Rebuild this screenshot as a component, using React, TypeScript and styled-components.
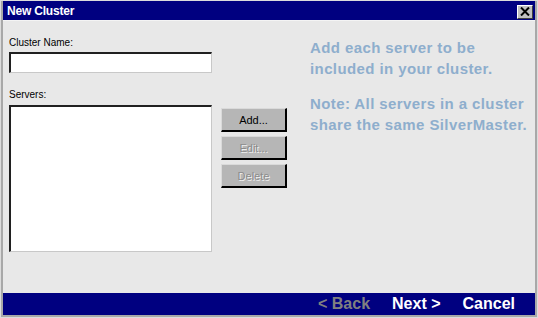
import React from "react";
import styled, { createGlobalStyle } from "styled-components";

const GlobalStyle = createGlobalStyle`
  html, body {
    margin: 0;
    padding: 0;
    background: #c0c0c0;
  }
  body {
    font-family: "Liberation Sans", Arial, sans-serif;
  }
`;

const Window = styled.div`
  width: 538px;
  height: 318px;
  box-sizing: border-box;
  display: flex;
  flex-direction: column;
  background: #a8a8a8;
  border: 1px solid #dcdcdc;
  padding: 0 2px 2px 2px;
`;

const TitleBar = styled.div`
  height: 19px;
  flex: none;
  display: flex;
  align-items: center;
  justify-content: space-between;
  background: #000080;
  padding: 0 2px 0 4px;
`;

const Title = styled.span`
  color: #fff;
  font-weight: bold;
  font-size: 12px;
  letter-spacing: -0.2px;
`;

const CloseButton = styled.button`
  width: 16px;
  height: 14px;
  padding: 0;
  margin-top: 2px;
  display: flex;
  align-items: center;
  justify-content: center;
  background: #c0c0c0;
  border: 1px solid;
  border-color: #fff #404040 #404040 #fff;
`;

const Body = styled.div`
  flex: 1;
  display: flex;
  align-items: flex-start;
  background: #e8e8e8;
  border-top: 1px solid #f4f4f4;
  padding: 15px 6px 0 6px;
`;

const LeftPane = styled.div`
  display: flex;
  flex-direction: column;
`;

const Label = styled.label`
  font-size: 10px;
  line-height: 13px;
  color: #000;
`;

const Sunken = styled.div`
  box-sizing: border-box;
  background: #fff;
  border-style: solid;
  border-width: 2px 1px 1px 2px;
  border-color: #202020 #c8c8c8 #c8c8c8 #202020;
`;

const TextInput = styled(Sunken)`
  width: 203px;
  height: 21px;
  margin: 3px 0 15px 0;
`;

const ListRow = styled.div`
  display: flex;
  gap: 9px;
  margin-top: 4px;
`;

const ListBox = styled(Sunken)`
  width: 203px;
  height: 147px;
`;

const ButtonCol = styled.div`
  display: flex;
  flex-direction: column;
  gap: 4px;
  margin-top: 3px;
`;

const SideButton = styled.button<{ $disabled?: boolean }>`
  width: 66px;
  height: 24px;
  box-sizing: border-box;
  padding: 0;
  background: #b6b6b6;
  border-style: solid;
  border-width: 1px 2px 2px 1px;
  border-color: #dadada #000 #000 #dadada;
  font-family: "Liberation Sans", Arial, sans-serif;
  font-size: 11px;
  color: ${(p) => (p.$disabled ? "#8c8c8c" : "#000")};
  text-shadow: ${(p) => (p.$disabled ? "1px 1px 0 #f0f0f0" : "none")};
`;

const InfoPane = styled.div`
  margin: 1px 0 0 23px;
  color: #8eaecd;
  font-weight: bold;
  font-size: 15px;
  letter-spacing: 0.4px;
  line-height: 21px;
`;

const InfoPara = styled.p`
  margin: 0 0 14px 0;
  white-space: pre;
`;

const Footer = styled.div`
  height: 22px;
  flex: none;
  display: flex;
  align-items: center;
  justify-content: flex-end;
  gap: 22px;
  background: #000080;
  padding-right: 20px;
`;

const NavLink = styled.span<{ $muted?: boolean }>`
  font-size: 16px;
  font-weight: bold;
  color: ${(p) => (p.$muted ? "#808080" : "#fff")};
`;

export default function App() {
  return (
    <>
      <GlobalStyle />
      <Window>
        <TitleBar>
          <Title>New Cluster</Title>
          <CloseButton>
            <svg width="10" height="9" viewBox="0 0 10 9">
              <path d="M1 0.5 L9 8.5 M9 0.5 L1 8.5" stroke="#000" strokeWidth="2" />
            </svg>
          </CloseButton>
        </TitleBar>
        <Body>
          <LeftPane>
            <Label>Cluster Name:</Label>
            <TextInput />
            <Label>Servers:</Label>
            <ListRow>
              <ListBox />
              <ButtonCol>
                <SideButton>Add...</SideButton>
                <SideButton $disabled>Edit...</SideButton>
                <SideButton $disabled>Delete</SideButton>
              </ButtonCol>
            </ListRow>
          </LeftPane>
          <InfoPane>
            <InfoPara>{"Add each server to be\nincluded in your cluster."}</InfoPara>
            <InfoPara>{"Note: All servers in a cluster\nshare the same SilverMaster."}</InfoPara>
          </InfoPane>
        </Body>
        <Footer>
          <NavLink $muted>&lt; Back</NavLink>
          <NavLink>Next &gt;</NavLink>
          <NavLink>Cancel</NavLink>
        </Footer>
      </Window>
    </>
  );
}
